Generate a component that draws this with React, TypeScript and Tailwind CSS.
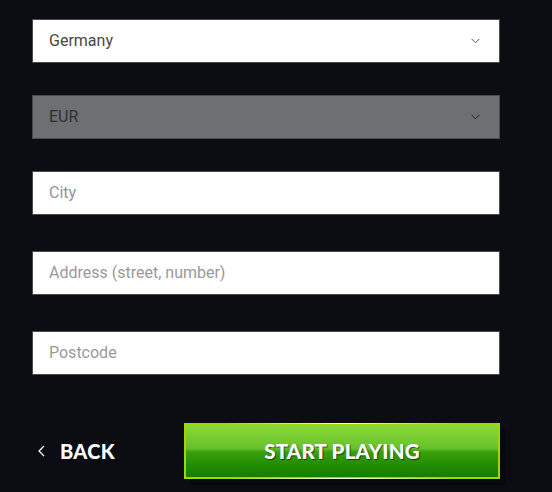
import React from "react";

const Chevron = ({ className }: { className?: string }) => (
  <svg width="9" height="6" viewBox="0 0 9 6" className={className} fill="none">
    <path d="M0.5 0.8 L4.5 4.8 L8.5 0.8" stroke="currentColor" strokeWidth="1" />
  </svg>
);

export default function App() {
  return (
    <div className="w-[552px] h-[492px] bg-[#0c0d13] overflow-hidden" style={{ fontFamily: "Roboto, 'Liberation Sans', sans-serif" }}>
      <div className="pl-[32px] pr-[52px] pt-[19px] flex flex-col">
        <div className="h-[44px] bg-white border border-[#4a4a4a] flex items-center justify-between pl-[16px] pr-[19px] text-[16px] text-[#474747]">
          <span>Germany</span>
          <Chevron className="text-[#555]" />
        </div>
        <div className="mt-[32px] h-[44px] bg-[#6e6f72] border border-[#4a4b50] flex items-center justify-between pl-[16px] pr-[19px] text-[16px] text-[#2e2f33]">
          <span>EUR</span>
          <Chevron className="text-[#222]" />
        </div>
        <div className="mt-[32px] h-[44px] bg-white border border-[#4a4a4a] flex items-center pl-[16px] text-[16px] text-[#8e949c]">
          City
        </div>
        <div className="mt-[36px] h-[44px] bg-white border border-[#4a4a4a] flex items-center pl-[16px] text-[16px] text-[#999999]">
          Address (street, number)
        </div>
        <div className="mt-[36px] h-[44px] bg-white border border-[#4a4a4a] flex items-center pl-[16px] text-[16px] text-[#999999]">
          Postcode
        </div>
        <div className="mt-[48px] flex items-center">
          <div className="w-[152px] flex items-center pl-[6px] gap-[15px] text-white" style={{ fontFamily: "Lato, 'Liberation Sans', sans-serif" }}>
            <svg width="7" height="12" viewBox="0 0 7 12" fill="none">
              <path d="M6 1 L1 6 L6 11" stroke="white" strokeWidth="1.3" />
            </svg>
            <span className="text-[20px] font-black tracking-[0.3px]">BACK</span>
          </div>
          <div className="relative w-[316px] h-[56px] shadow-[6px_6px_0_rgba(0,0,0,0.3)]">
            <div className="absolute inset-0 border-2 border-[#a6d400] bg-[linear-gradient(to_bottom,#8ad93a_0%,#68c12a_45%,#3a9f0c_52%,#1f8a00_80%,#177d00_100%)] flex items-center justify-center">
              <span className="text-white text-[20.5px] font-black tracking-[0.2px] [text-shadow:1px_1px_1px_rgba(0,0,0,0.55)]" style={{ fontFamily: "Lato, 'Liberation Sans', sans-serif" }}>
                START PLAYING
              </span>
            </div>
            <div className="absolute left-[40px] right-[40px] top-0 h-[1px] bg-[linear-gradient(to_right,transparent,#f4ffd0,transparent)]" />
            <div className="absolute left-[40px] right-[40px] bottom-0 h-[1px] bg-[linear-gradient(to_right,transparent,#f4ffd0,transparent)]" />
          </div>
        </div>
      </div>
    </div>
  );
}
